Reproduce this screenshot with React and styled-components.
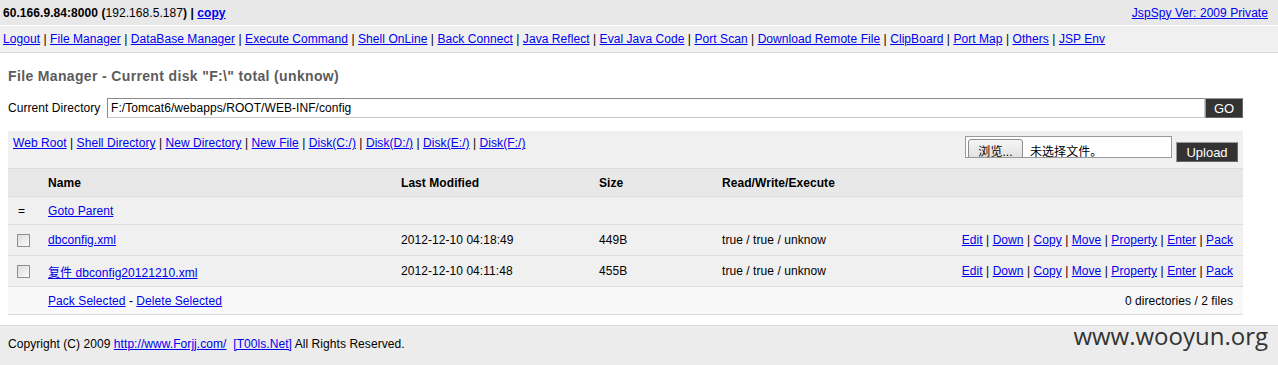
import React from "react";
import styled, { createGlobalStyle } from "styled-components";

const Global = createGlobalStyle`
  html, body { margin: 0; padding: 0; background: #fff; }
  body {
    font-family: "Liberation Sans", Arial, sans-serif;
    font-size: 12px;
    color: #000;
    letter-spacing: 0.06px;
  }
`;

const Page = styled.div`
  width: 1278px;
  height: 365px;
  overflow: hidden;
  position: relative;
`;

const TopBar = styled.div`
  height: 25px;
  background: #e8e8e8;
  border-bottom: 1px solid #fff;
  display: flex;
  align-items: center;
  justify-content: space-between;
  padding: 0 10px 0 3px;
`;

const Link = styled.a`
  color: #0000ee;
  text-decoration: underline;
  font-weight: ${(p) => (p.$bold ? "bold" : "inherit")};
  cursor: pointer;
`;

const NavBar = styled.div`
  height: 26px;
  background: #f0f0f0;
  border-bottom: 1px solid #dcdcdc;
  display: flex;
  align-items: center;
  padding: 0 3px;
  white-space: pre;
`;

const Main = styled.div`
  width: 1235px;
  margin-left: 8px;
`;

const Title = styled.h2`
  margin: 15px 0 0;
  font-size: 14px;
  line-height: 16px;
  font-weight: bold;
  color: #5c5c5c;
  letter-spacing: 0.35px;
`;

const DirRow = styled.div`
  margin-top: 14px;
  display: flex;
  align-items: center;
  height: 20px;
`;

const Label = styled.span`
  width: 99px;
  flex: none;
`;

const PathInput = styled.div`
  flex: 1;
  height: 20px;
  box-sizing: border-box;
  border: 1px solid #8a8a8a;
  border-right-color: #c8c8c8;
  border-bottom-color: #c8c8c8;
  background: #fff;
  display: flex;
  align-items: center;
  padding-left: 3px;
`;

const DarkButton = styled.button`
  font-family: "Liberation Sans", Arial, sans-serif;
  font-size: ${(p) => p.$size || 12}px;
  color: #fff;
  background: #333;
  border: 1px solid;
  border-color: #999 #666 #666 #999;
  box-sizing: border-box;
  width: ${(p) => p.$w}px;
  height: 20px;
  padding: 0;
  margin: ${(p) => p.$m || "0"};
  flex: none;
`;

const Toolbar = styled.div`
  margin-top: 13px;
  height: 37px;
  background: #f0f0f0;
  display: flex;
  justify-content: space-between;
  align-items: flex-start;
  padding: 5px 5px 0 5px;
  box-sizing: border-box;
  white-space: pre;
`;

const ToolLinks = styled.div`
  line-height: 14px;
`;

const UploadWrap = styled.div`
  display: flex;
  align-items: flex-start;
`;

const FileBox = styled.div`
  width: 207px;
  height: 22px;
  box-sizing: border-box;
  border: 1px solid #9a9a9a;
  background: #fff;
  overflow: hidden;
  display: flex;
  align-items: flex-start;
  padding: 2px 0 0 2px;
  font-family: "Liberation Sans", "Noto Sans CJK SC", sans-serif;
`;

const BrowseBtn = styled.span`
  display: inline-flex;
  align-items: center;
  justify-content: center;
  width: 55px;
  height: 22px;
  box-sizing: border-box;
  border: 1px solid #8c8c8c;
  border-radius: 3px;
  background: linear-gradient(#f6f6f6, #dedede);
  font-size: 12px;
  color: #000;
  flex: none;
`;

const NoFile = styled.span`
  margin-left: 7px;
  margin-top: 3px;
  font-size: 12px;
`;

const Table = styled.div`
  border-top: 1px solid #dcdcdc;
`;

const Row = styled.div`
  display: grid;
  grid-template-columns: 40px 353px 198px 123px 1fr auto;
  align-items: center;
  height: ${(p) => p.$h}px;
  background: ${(p) => p.$bg};
  border-bottom: 1px solid #dcdcdc;
  font-weight: ${(p) => (p.$head ? "bold" : "normal")};
  white-space: pre;
`;

const Cell = styled.div`
  padding-right: ${(p) => (p.$right ? "10px" : "0")};
  ${(p) => p.$span && `grid-column: ${p.$span};`}
  ${(p) => p.$right && `justify-self: end;`}
  ${(p) => p.$cjk && `font-family: "Liberation Sans", "Noto Sans CJK SC", sans-serif;`}
`;

const Check = styled.input.attrs({ type: "checkbox" })`
  appearance: none;
  -webkit-appearance: none;
  width: 13px;
  height: 13px;
  margin: 0 0 0 9px;
  box-sizing: border-box;
  border: 1px solid #8e8f8f;
  background: linear-gradient(135deg, #dcdcdc, #fbfbfb);
  display: block;
`;

const Equal = styled.span`
  display: block;
  padding-left: 10px;
  font-size: 12px;
`;

const Footer = styled.div`
  margin-top: 10px;
  border-top: 1px solid #dcdcdc;
  background: #ececec;
  height: 40px;
  box-sizing: border-box;
  padding: 11px 8px 0;
  line-height: 14px;
  white-space: pre;
  display: flex;
  justify-content: space-between;
  align-items: flex-start;
`;

const Watermark = styled.span`
  font-family: "Open Sans", "DejaVu Sans", sans-serif;
  font-size: 24px;
  line-height: 24px;
  letter-spacing: 0;
  color: #333;
  margin-top: -13px;
  margin-right: 2px;
`;

const Sep = () => " | ";

const navItems = [
  "Logout",
  "File Manager",
  "DataBase Manager",
  "Execute Command",
  "Shell OnLine",
  "Back Connect",
  "Java Reflect",
  "Eval Java Code",
  "Port Scan",
  "Download Remote File",
  "ClipBoard",
  "Port Map",
  "Others",
  "JSP Env",
];

const toolItems = [
  "Web Root",
  "Shell Directory",
  "New Directory",
  "New File",
  "Disk(C:/)",
  "Disk(D:/)",
  "Disk(E:/)",
  "Disk(F:/)",
];

const actions = ["Edit", "Down", "Copy", "Move", "Property", "Enter", "Pack"];

const files = [
  { name: "dbconfig.xml", date: "2012-12-10 04:18:49", size: "449B" },
  { name: "复件 dbconfig20121210.xml", date: "2012-12-10 04:11:48", size: "455B" },
];

const joinLinks = (items) =>
  items.map((t, i) => (
    <React.Fragment key={t}>
      {i > 0 && <Sep />}
      <Link>{t}</Link>
    </React.Fragment>
  ));

export default function App() {
  return (
    <Page>
      <Global />
      <TopBar>
        <div>
          <b>60.166.9.84:8000</b> <b>(</b>192.168.5.187<b>) | </b>
          <Link $bold>copy</Link>
        </div>
        <Link>JspSpy Ver: 2009 Private</Link>
      </TopBar>
      <NavBar>{joinLinks(navItems)}</NavBar>
      <Main>
        <Title>File Manager - Current disk "F:\" total (unknow)</Title>
        <DirRow>
          <Label>Current Directory</Label>
          <PathInput>F:/Tomcat6/webapps/ROOT/WEB-INF/config</PathInput>
          <DarkButton $w={38} $size={13}>GO</DarkButton>
        </DirRow>
        <Toolbar>
          <ToolLinks>{joinLinks(toolItems)}</ToolLinks>
          <UploadWrap>
            <FileBox>
              <BrowseBtn>浏览...</BrowseBtn>
              <NoFile>未选择文件。</NoFile>
            </FileBox>
            <DarkButton $w={62} $size={13} $m="6px 0 0 4px">
              Upload
            </DarkButton>
          </UploadWrap>
        </Toolbar>
        <Table>
          <Row $h={27} $bg="#e8e8e8" $head>
            <Cell />
            <Cell>Name</Cell>
            <Cell>Last Modified</Cell>
            <Cell>Size</Cell>
            <Cell>Read/Write/Execute</Cell>
            <Cell />
          </Row>
          <Row $h={27} $bg="#f0f0f0">
            <Cell>
              <Equal>=</Equal>
            </Cell>
            <Cell>
              <Link>Goto Parent</Link>
            </Cell>
          </Row>
          {files.map((f) => (
            <Row key={f.name} $h={30} $bg="#f0f0f0">
              <Cell>
                <Check />
              </Cell>
              <Cell $cjk>
                <Link>{f.name}</Link>
              </Cell>
              <Cell>{f.date}</Cell>
              <Cell>{f.size}</Cell>
              <Cell>true / true / unknow</Cell>
              <Cell $right>{joinLinks(actions)}</Cell>
            </Row>
          ))}
          <Row $h={27} $bg="#f8f8f8">
            <Cell />
            <Cell $span="2 / 5">
              <Link>Pack Selected</Link> - <Link>Delete Selected</Link>
            </Cell>
            <Cell $span="5 / 7" $right>
              0 directories / 2 files
            </Cell>
          </Row>
        </Table>
      </Main>
      <Footer>
        <span>
          Copyright (C) 2009 <Link>http://www.Forjj.com/</Link>  <Link>[T00ls.Net]</Link> All Rights Reserved.
        </span>
        <Watermark>www.wooyun.org</Watermark>
      </Footer>
    </Page>
  );
}
